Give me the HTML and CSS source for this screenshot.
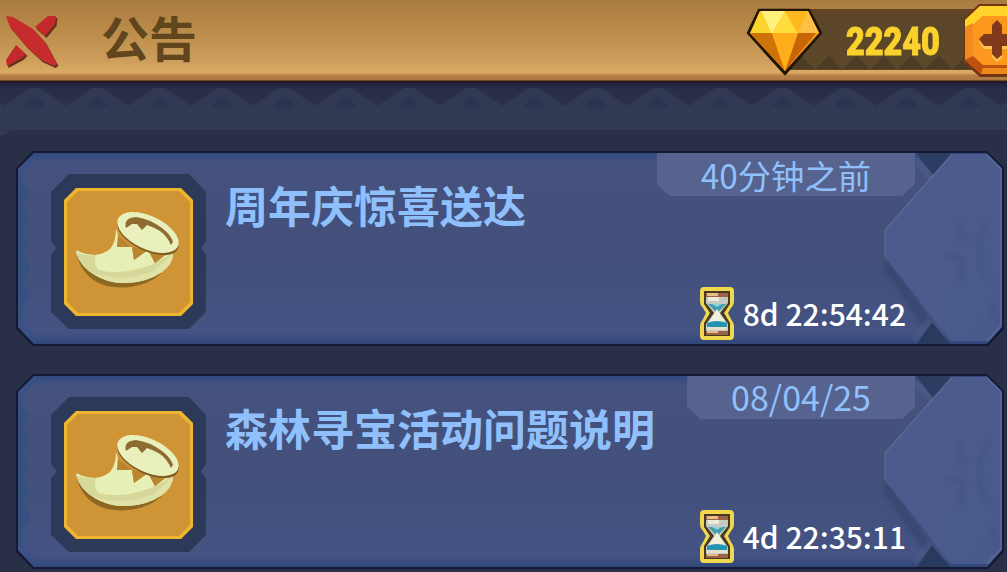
FILE: index.html
```html
<!DOCTYPE html>
<html lang="zh-CN">
<head>
    <meta charset="UTF-8">
    <meta name="viewport" content="width=device-width, initial-scale=1.0">
    <title>公告</title>
    <link rel="stylesheet" href="styles.css">
</head>
<body>
    <!-- shared artwork -->
    <svg class="defs" width="0" height="0">
        <defs>
            <linearGradient id="cardFill" x1="0" y1="0" x2="0" y2="1">
                <stop offset="0" stop-color="#2f4a80"/>
                <stop offset="0.05" stop-color="#45527f"/>
                <stop offset="0.5" stop-color="#43507b"/>
                <stop offset="0.94" stop-color="#445383"/>
                <stop offset="1" stop-color="#30477a"/>
            </linearGradient>
            <linearGradient id="arrowFill" x1="0" y1="0" x2="1" y2="1">
                <stop offset="0" stop-color="#4d5b8c"/>
                <stop offset="1" stop-color="#485a8c"/>
            </linearGradient>
            <filter id="soft" x="-30%" y="-30%" width="160%" height="160%">
                <feGaussianBlur stdDeviation="2"/>
            </filter>
        </defs>

        <symbol id="card-art" viewBox="0 0 988 195">
            <path d="M0 17L17 0H971L988 17V178L972 195H17L0 178Z" fill="#141a34"/>
            <path d="M2 18L18 2H970L986 18V176L971 193H18L2 176Z" fill="url(#cardFill)"/>
            <path d="M2 18L18 2L24 6L8 20V174L24 188L18 193L2 176Z" fill="#34528a" opacity="0.5"/>
            <path d="M5 30L14 42L6 54L15 67L6 80L14 92L6 104L15 117L6 130L15 143L5 158V172L2 172V24L5 24Z" fill="#30507f" opacity="0.6"/>
            <path d="M900 2H936L918 25Z" fill="#2b3d60"/>
            <path d="M901 193H934L916 171Z" fill="#283b5e"/>
            <path d="M869 106L901 148L915 171L909 178L867 118Z" fill="#37456f" opacity="0.8" filter="url(#soft)"/>
            <path d="M901 6L918 25L914 30L896 9Z" fill="#4c5f8c" opacity="0.5"/>
            <path d="M901 191L916 171L911 167L895 188Z" fill="#4c5f8c" opacity="0.4"/>
            <path d="M869 79L936 3H970L985 18V175L971 190H935L869 106Z" fill="url(#arrowFill)"/>
            <path d="M869 106V79L936 3" fill="none" stroke="#64719d" stroke-width="1.3" opacity="0.7"/>
            <path d="M970 3L985 18V175L971 190" fill="none" stroke="#55679a" stroke-width="2"/>
            <g fill="none" stroke="#3f4f80" stroke-linecap="round" filter="url(#soft)" opacity="0.4">
                <path d="M946 70q-6 9 3 12l-5 9" stroke-width="5"/>
                <path d="M932 104l15 5-2 22" stroke-width="6"/>
                <path d="M973 68q-14 17-8 34q-4 16 8 28" stroke-width="5"/>
                <path d="M979 155l-4 8 8 8" stroke-width="5"/>
            </g>
        </symbol>

        <symbol id="horn" viewBox="0 0 155 155">
            <path d="M18 0H138L155 18V67L150 74L155 81V138L138 155H18L0 138V81L6 74L0 67V18Z" fill="#2d3958"/>
            <path d="M25 14H130L142 26V130L130 142H25L13 130V26Z" fill="#efb52e"/>
            <path d="M27 17H128L139 28V128L128 139H27L16 128V28Z" fill="#cf9436"/>
            <path d="M26 82Q33 106 56 112Q82 117 103 105Q119 94 121 81L114 84L104 88L71 105Z" fill="#80601f" opacity="0.85"/>
            <path d="M25 78Q26 75 29 78Q36 81 44 81Q53 80 59 75Q65 68 65 55Q68 60 66 73L81 73L83 86L97 76L104 89L113 82L122 79Q122 90 111 98Q93 110 71 109Q55 108 44 101Q29 93 25 78Z" fill="#e6efb6"/>
            <path d="M25 78Q33 82 45 81Q42 89 47 96Q68 101 87 95Q98 92 104 89L122 79Q122 90 111 98Q93 110 71 109Q55 108 44 101Q29 93 25 78Z" fill="#d6d899"/>
            <path d="M39 98Q70 110 103 97L122 79Q122 90 111 98Q93 110 71 109Q53 108 39 98Z" fill="#dfe3a8"/>
            <path d="M67 62L81 73H66ZM81 73L83 86L97 76ZM97 76L104 89L113 82Z" fill="#b9862f"/>
            <ellipse cx="97" cy="61" rx="33" ry="16" transform="rotate(25 97 61)" fill="#815d24"/>
            <ellipse cx="97" cy="58.5" rx="33" ry="16.5" transform="rotate(25 97 58.5)" fill="#e9f0bc"/>
            <path d="M75 54Q72 44 85 43Q99 45 111 54Q120 61 122 68L120 71Q116 62 109 57Q102 53 96 51L91 56L86 50L81 50Z" fill="#8e6b30"/>
        </symbol>

        <symbol id="hourglass" viewBox="0 0 34 53">
            <path d="M4 0H30Q34 0 34 4V15Q34 18 31 21L28 26L31 32Q34 36 34 39V49Q34 53 30 53H4Q0 53 0 49V39Q0 36 3 32L6 26L3 21Q0 18 0 15V4Q0 0 4 0Z" fill="#efd84e"/>
            <path d="M4 4H30V17L24 26L30 36V49H4V36L10 26L4 17Z" fill="#493921"/>
            <path d="M6 7H28V16L20 26L28 37V47H6V37L14 26L6 16Z" fill="#c3cbc2"/>
            <path d="M6 6H28V10H6ZM6 44H28V48H6Z" fill="#9d6146"/>
            <path d="M7 6H18V9H7ZM7 44H18V46H7Z" fill="#e8bd87"/>
            <path d="M8 10H19V14H8Z" fill="#ebebda"/>
            <path d="M8 17H26L17 26Z" fill="#429eac"/>
            <path d="M12 17H22L17 20Z" fill="#8bd4d6"/>
            <path d="M17 22L25 35H9Z" fill="#f0f1dc"/>
            <path d="M7 36Q17 32 27 36V40H7Z" fill="#2494b5"/>
            <path d="M7 40H27V43H7Z" fill="#e4e3ca"/>
        </symbol>
    </svg>

    <header class="topbar">
        <svg class="close" width="56" height="56" viewBox="0 0 56 56">
            <g fill="#64321b" transform="translate(1.5 2)">
                <path d="M31 12L44 1H52L51 9L41 21Z"/>
                <path d="M12 30L22 39L18 43L3 51L2 45Z"/>
                <path d="M2 1L9 2L29 14L41 27L53 49L50 51L37 45L22 31L6 12Z"/>
            </g>
            <g fill="#c3292a">
                <path d="M31 12L44 1H52L51 9L41 21Z"/>
                <path d="M12 30L22 39L18 43L3 51L2 45Z"/>
            </g>
            <path d="M2 1L9 2L29 14L41 27L53 49L50 51L37 45L22 31L6 12Z" fill="#c62c2d"/>
        </svg>
        <h1>公告</h1>
        <div class="wallet">
            <svg class="gem" width="78" height="70" viewBox="0 0 78 70">
                <path d="M14 3H64L76 26L40 67L3 26Z" fill="#211606" stroke="#211606" stroke-width="2.5" stroke-linejoin="round"/>
                <path d="M15 4H63L74 26L40 64L5 26Z" fill="#ffb61c"/>
                <path d="M15 4L28 27H5Z" fill="#fbd42d"/>
                <path d="M16 4H40L27 27Z" fill="#fff17a"/>
                <path d="M40 4L53 27H27Z" fill="#ffdb3b"/>
                <path d="M40 4H63L53 27Z" fill="#ffb91e"/>
                <path d="M63 4L74 26H53Z" fill="#fdc044"/>
                <path d="M5 26H27L40 64Z" fill="#cf7208"/>
                <path d="M27 26H53L40 64Z" fill="#ffad1b"/>
                <path d="M53 26H74L40 64Z" fill="#c76508"/>
                <path d="M71 26H74L42 61Z" fill="#f5941a"/>
            </svg>
            <span class="amount">22240</span>
            <svg class="plus" width="44" height="74" viewBox="0 0 44 74">
                <path d="M0 16L16 1H44V74H17L0 59Z" fill="#733614"/>
                <path d="M2 17L17 3H44V71H18L2 57Z" fill="#ee7d16"/>
                <path d="M2 17L17 3H44V13H20L10 22L2 26Z" fill="#ffd329"/>
                <path d="M2 24L10 20V53L2 57Z" fill="#f28b1d"/>
                <path d="M2 57L10 53L20 61H44V71H18Z" fill="#bd520f"/>
                <path d="M20 65H44V71H18Z" fill="#ee8a1c"/>
                <path d="M10 22L20 13H44V62H20L10 53Z" fill="#fb981d"/>
                <path d="M16 39L21 33H29V24L34 19L39 24V33H44V46H39V55L34 59L29 54V46H21Z" fill="#ffc355"/>
                <path d="M16 36L21 31H29V22L34 17L39 22V31H44V43H39V52L34 56L29 51V43H21Z" fill="#80391b"/>
            </svg>
        </div>
    </header>

    <svg class="trim" width="1007" height="52">
        <defs>
            <pattern id="peaks" x="4" width="62.3" height="52" patternUnits="userSpaceOnUse">
                <path d="M0 23L26 5H36L62.3 23V52H0Z" fill="#313953"/>
                <path d="M20 22L31 13L42 22L36 25H26Z" fill="#2b3450"/>
            </pattern>
        </defs>
        <rect width="1007" height="48" fill="url(#peaks)"/>
        <path d="M0 58L10 47H1007V52H0Z" fill="#292f46"/>
    </svg>

    <main class="list">
        <article class="card">
            <svg class="card-bg"><use href="#card-art"/></svg>
            <svg class="thumb"><use href="#horn"/></svg>
            <h2>周年庆惊喜送达</h2>
            <div class="meta">
                <span class="tag">40分钟之前</span>
                <div class="timer">
                    <svg class="glass"><use href="#hourglass"/></svg>
                    <span>8d 22:54:42</span>
                </div>
            </div>
        </article>

        <article class="card">
            <svg class="card-bg"><use href="#card-art"/></svg>
            <svg class="thumb"><use href="#horn"/></svg>
            <h2>森林寻宝活动问题说明</h2>
            <div class="meta">
                <span class="tag date">08/04/25</span>
                <div class="timer">
                    <svg class="glass"><use href="#hourglass"/></svg>
                    <span>4d 22:35:11</span>
                </div>
            </div>
        </article>
    </main>
</body>
</html>
```
FILE: styles.css
```css
* {
    box-sizing: border-box;
}
body {
    margin: 0;
    height: 572px;
    overflow: hidden;
    background-color: #292f46;
    font-family: "Noto Sans CJK SC", "Noto Sans", sans-serif;
}
svg {
    display: block;
    flex-shrink: 0;
}
.defs {
    position: absolute;
}
.topbar {
    display: flex;
    align-items: flex-start;
    height: 83px;
    padding-left: 4px;
    background: linear-gradient(#a87b40 0, #b88848 25px, #cd9d5b 60px, #dbaa62 73px, #b98249 75px, #ad7842 80px, #2a1b18 81px, #1d1c2b 83px);
}
.close {
    margin-top: 15px;
}
h1 {
    margin: 1px 0 0 41px;
    font-size: 48px;
    line-height: 70px;
    font-weight: 700;
    color: #60451d;
}
.wallet {
    display: flex;
    align-items: flex-start;
    width: 262px;
    margin-left: auto;
    padding-left: 45px;
    background: 
        conic-gradient(from 135deg at 50% 0, #4c3c26 90deg, transparent 0) 25px 56px / 27.5px 13px repeat-x,
        linear-gradient(#664525 0, #5b4629 8px, #5c4828 60px) 0 9px / 217px 61px no-repeat;
    background-origin: content-box;
    background-clip: content-box;
}
.gem {
    margin: 7px 0 0 -45px;
}
.amount {
    width: 96px;
    margin: 16px 0 0 23px;
    font-family: Roboto, sans-serif;
    font-size: 39px;
    line-height: 52px;
    font-weight: 900;
    color: #fbd12d;
    -webkit-text-stroke: 1px #fbd12d;
    transform: scaleX(0.83);
    transform-origin: left;
}
.plus {
    margin: 3px 0 0 21px;
}
.trim {
    background: linear-gradient(#202337, #292d47 5px, #2b304a 24px, #323a54 25px);
}
.list {
    display: flex;
    flex-direction: column;
    gap: 28px;
    padding: 16px 3px 0 16px;
}
.card {
    display: flex;
    position: relative;
    height: 195px;
}
.card-bg {
    position: absolute;
    left: 0;
    top: 0;
    width: 988px;
    height: 195px;
}
.thumb {
    position: relative;
    width: 155px;
    height: 155px;
    margin: 23px 0 0 35px;
}
h2 {
    position: relative;
    margin: 22px 0 0 19px;
    font-size: 43px;
    line-height: 62px;
    font-weight: 700;
    color: #8fc0fb;
    white-space: nowrap;
}
.meta {
    display: flex;
    position: relative;
    flex-direction: column;
    align-items: flex-end;
    justify-content: space-between;
    margin-left: auto;
    padding: 2px 89px 6px 0;
}
.tag {
    height: 43px;
    padding: 0 44px;
    font-size: 33.3px;
    line-height: 43px;
    color: #8fc0fb;
    background-color: #56638e;
    clip-path: polygon(0 0, 100% 0, 100% 31px, calc(100% - 13px) 100%, 13px 100%, 0 31px);
}
.tag.date {
    font-size: 34px;
    line-height: 42px;
}
.timer {
    display: flex;
    align-items: center;
    gap: 9px;
    padding-right: 9px;
    font-size: 30px;
    line-height: 53px;
    font-weight: 500;
    color: #fff;
}
.glass {
    width: 34px;
    height: 53px;
}
```
